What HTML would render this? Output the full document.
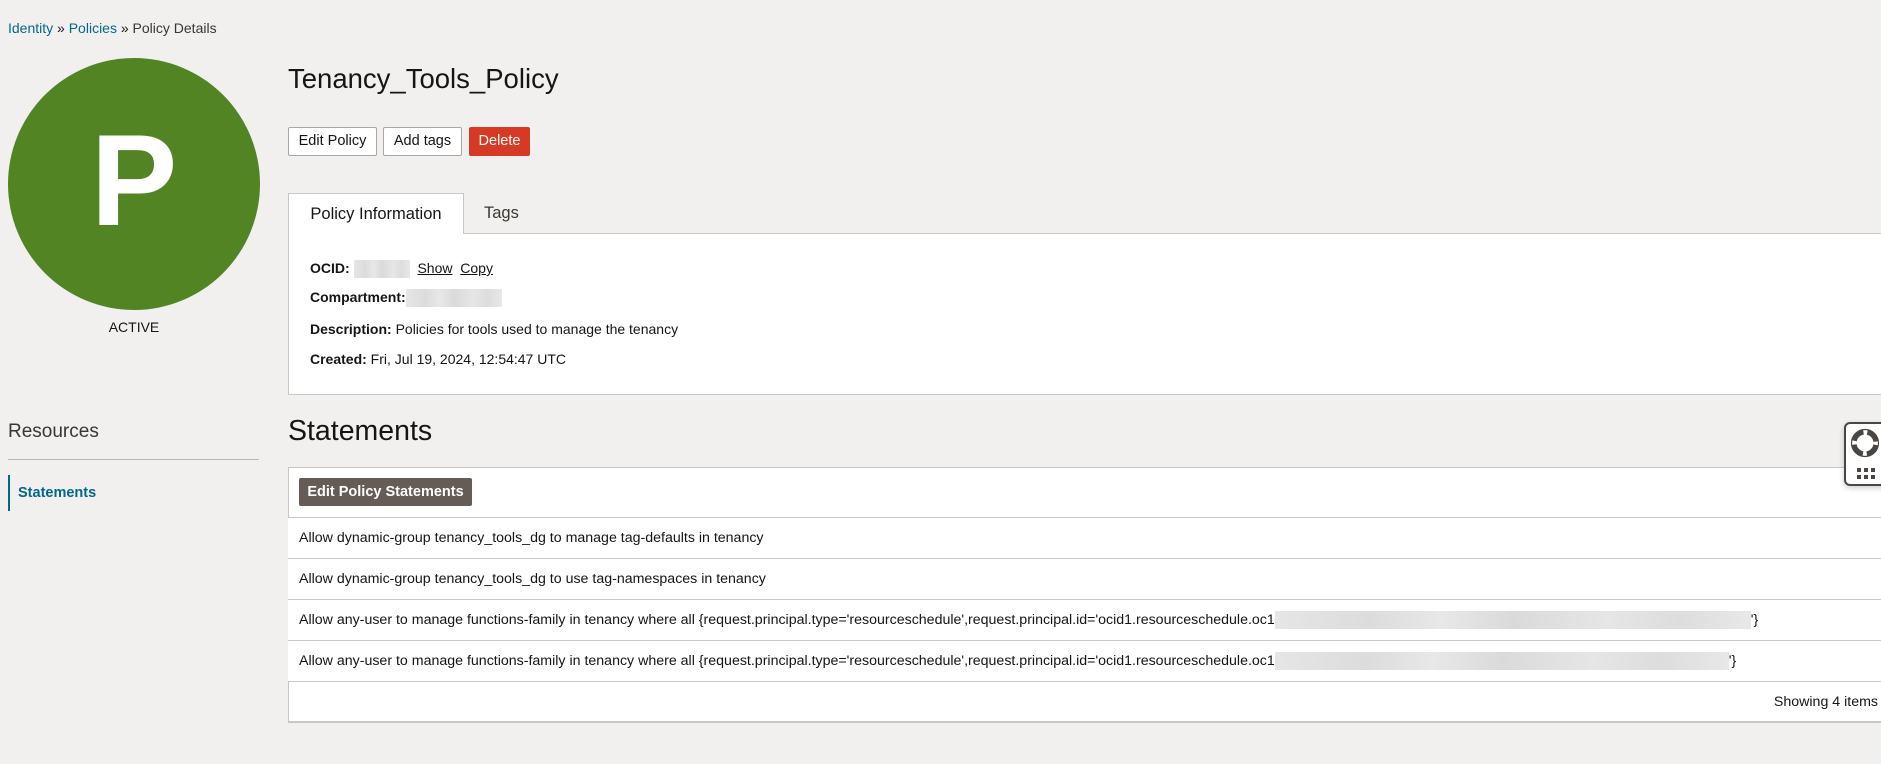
<!DOCTYPE html>
<html><head><meta charset="utf-8">
<style>
*{box-sizing:border-box;margin:0;padding:0}
body{width:1881px;height:764px;overflow:hidden;background:#f1f0ee;font-family:"Liberation Sans",Arial,sans-serif;color:#161513;position:relative}
.a{position:absolute;white-space:nowrap}
a{color:#00688c;text-decoration:none}
.btn{position:absolute;top:127px;height:29px;border:1px solid #a9a6a3;background:#fff;border-radius:2px;font-size:14.5px;line-height:27px;text-align:center;color:#161513}
.row{position:absolute;left:288px;width:1600px;border-top:1px solid #c9c6c3;height:41px;font-size:14.2px;line-height:40px;padding-left:11px;background:#fff}
.red{display:inline-block;height:18px;vertical-align:middle;background:linear-gradient(90deg,#e6e6e6,#dcdcdc 20%,#e8e8e8 35%,#dadada 50%,#e6e6e6 70%,#dddddd 85%,#e8e8e8)}
</style></head><body>
<div class="a" style="left:8px;top:20px;font-size:14px"><a>Identity</a> » <a>Policies</a> » <span style="color:#3a3631">Policy Details</span></div>
<div class="a" style="left:8px;top:58px;width:252px;height:252px;border-radius:50%;background:#528424;"></div>
<div class="a" style="left:8px;top:110px;width:252px;text-align:center;color:#fff;font-weight:bold;font-size:130px;line-height:140px">P</div>
<div class="a" style="left:8px;top:319px;width:252px;text-align:center;font-size:14px">ACTIVE</div>
<div class="a" style="left:288px;top:63px;font-size:27.5px">Tenancy_Tools_Policy</div>
<div class="btn" style="left:288px;width:89px">Edit Policy</div>
<div class="btn" style="left:383px;width:79px">Add tags</div>
<div class="btn" style="left:469px;width:61px;background:#d73a24;border-color:#d73a24;color:#fff">Delete</div>
<div class="a" style="left:288px;top:233px;width:1600px;height:162px;background:#fff;border:1px solid #c9c6c3"></div>
<div class="a" style="left:288px;top:193px;width:176px;height:41px;background:#fff;border:1px solid #c9c6c3;border-bottom:none;font-size:16.5px;line-height:40px;text-align:center">Policy Information</div>
<div class="a" style="left:484px;top:193px;font-size:16.5px;line-height:40px;color:#3a3631">Tags</div>
<div class="a" style="left:310px;top:260px;font-size:14px"><b>OCID:</b> <span class="red" style="width:56px"></span> <u style="margin-left:4px">Show</u>&nbsp; <u>Copy</u></div>
<div class="a" style="left:310px;top:289px;font-size:14px"><b>Compartment:</b><span class="red" style="width:96px"></span></div>
<div class="a" style="left:310px;top:321px;font-size:14px"><b>Description:</b> Policies for tools used to manage the tenancy</div>
<div class="a" style="left:310px;top:351px;font-size:14px"><b>Created:</b> Fri, Jul 19, 2024, 12:54:47 UTC</div>
<div class="a" style="left:8px;top:421px;font-size:19px;color:#3a3631">Resources</div>
<div class="a" style="left:8px;top:459px;width:251px;border-top:1px solid #b9b6b3"></div>
<div class="a" style="left:8px;top:475px;height:36px;border-left:2px solid #00688c;padding-left:8px;line-height:36px;font-size:14.5px;font-weight:bold;color:#00688c">Statements</div>
<div class="a" style="left:288px;top:415px;font-size:28.5px">Statements</div>
<div class="a" style="left:288px;top:467px;width:1600px;height:256px;background:#fff;border:1px solid #c9c6c3"></div>
<div class="a" style="left:299px;top:478px;width:173px;height:28px;background:#655c57;border-radius:2px;color:#fff;font-weight:bold;font-size:14.5px;line-height:28px;text-align:center">Edit Policy Statements</div>
<div class="row" style="top:517px">Allow dynamic-group tenancy_tools_dg to manage tag-defaults in tenancy</div>
<div class="row" style="top:558px">Allow dynamic-group tenancy_tools_dg to use tag-namespaces in tenancy</div>
<div class="row" style="top:599px">Allow any-user to manage functions-family in tenancy where all {request.principal.type='resourceschedule',request.principal.id='ocid1.resourceschedule.oc1<span class="red" style="width:476px"></span>'}</div>
<div class="row" style="top:640px">Allow any-user to manage functions-family in tenancy where all {request.principal.type='resourceschedule',request.principal.id='ocid1.resourceschedule.oc1<span class="red" style="width:454px"></span>'}</div>
<div class="row" style="top:681px;height:41px;border-bottom:1px solid #c9c6c3;border-left:1px solid #c9c6c3"></div>
<div class="a" style="left:1700px;top:682px;width:178px;height:40px;font-size:14.2px;line-height:40px;text-align:right">Showing 4 items</div>
<div class="a" style="left:1844px;top:422px;width:45px;height:64px;background:#fff;border:2px solid #4a4643;border-radius:6px;box-shadow:0 2px 6px rgba(0,0,0,.2)">
<svg width="40" height="60" viewBox="0 0 40 60"><circle cx="19" cy="19" r="11" fill="none" stroke="#4a4643" stroke-width="5"/><circle cx="19" cy="19" r="11" fill="none" stroke="#fff" stroke-width="5" stroke-dasharray="4 13.3" stroke-dashoffset="2"/><circle cx="19" cy="19" r="13.5" fill="none" stroke="#4a4643" stroke-width="1.2"/><g fill="#4a4643"><rect x="11" y="44" width="4" height="4"/><rect x="18" y="44" width="4" height="4"/><rect x="25" y="44" width="4" height="4"/><rect x="11" y="51" width="4" height="4"/><rect x="18" y="51" width="4" height="4"/><rect x="25" y="51" width="4" height="4"/></g></svg></div>
</body></html>
